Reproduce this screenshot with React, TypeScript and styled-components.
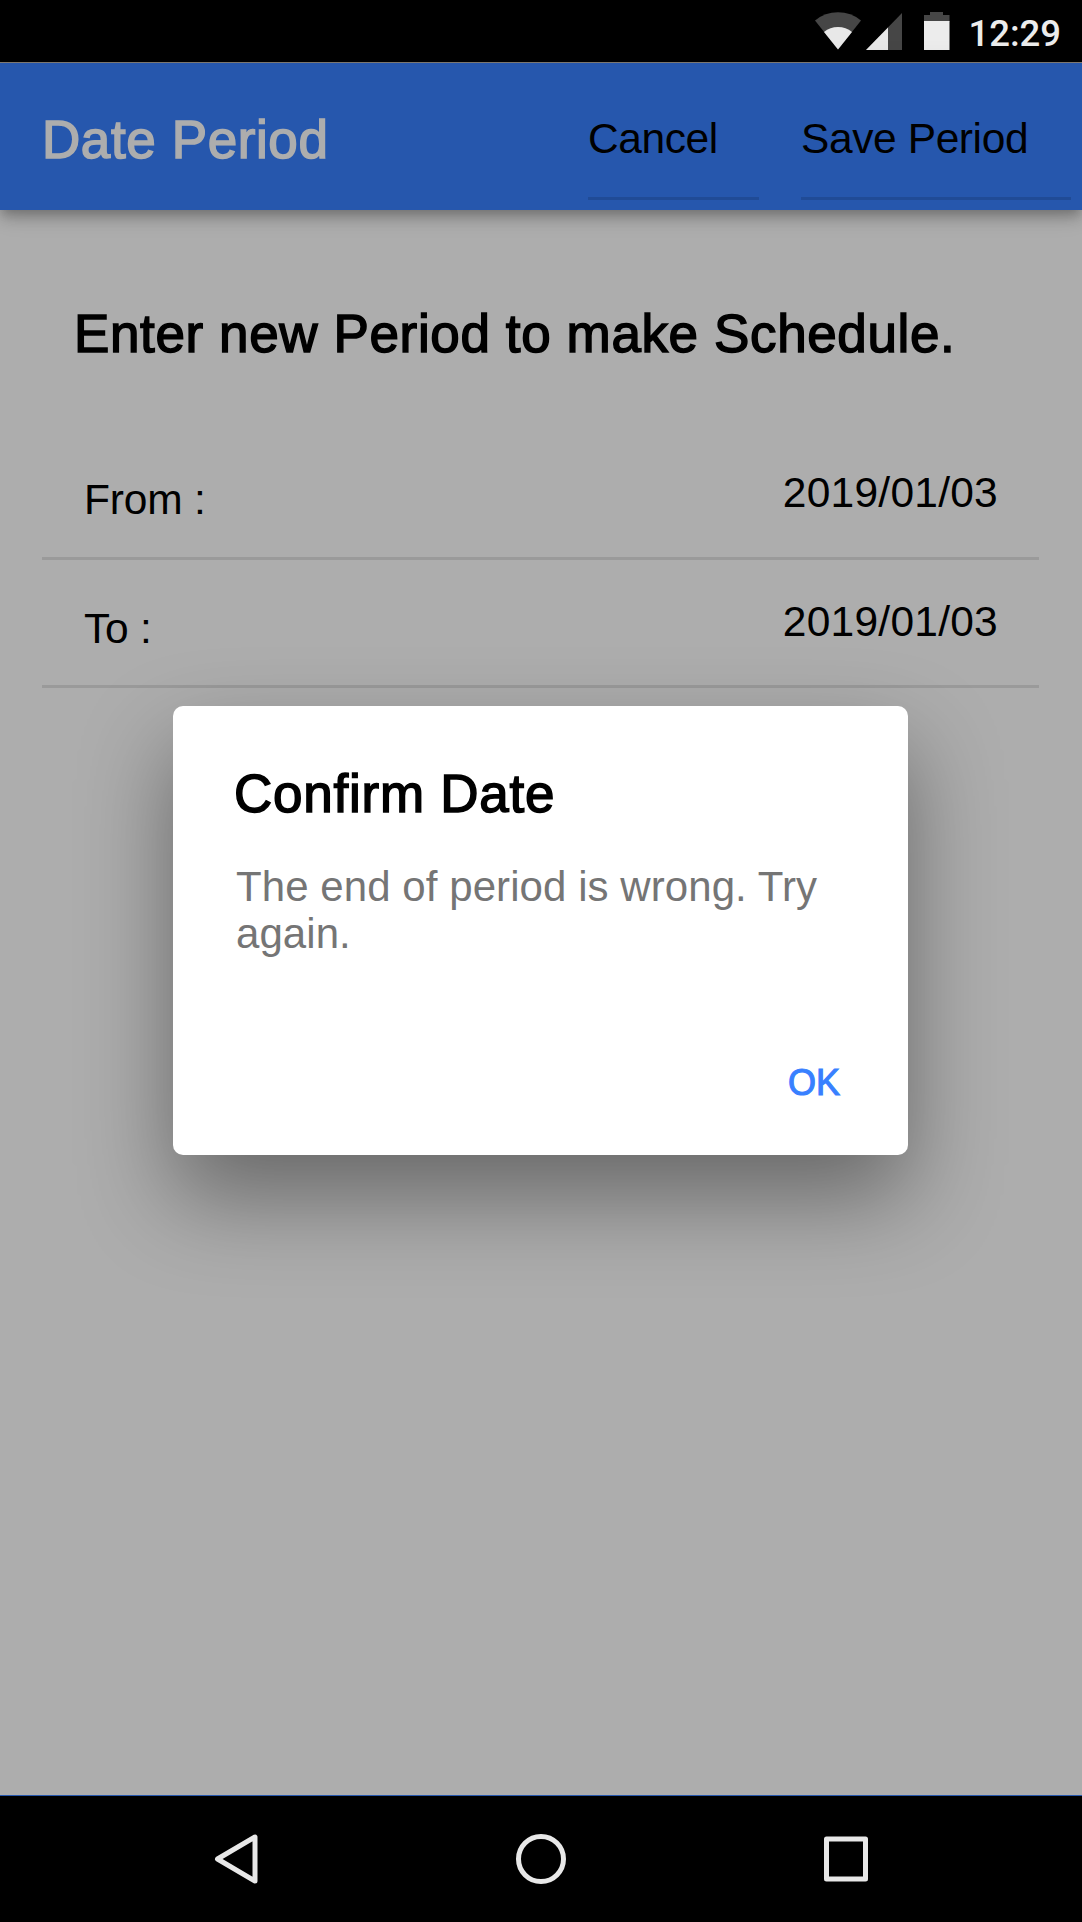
import React from 'react';
import styled, { createGlobalStyle } from 'styled-components';

const GlobalStyle = createGlobalStyle`
  * { box-sizing: border-box; }
  body {
    margin: 0;
    background: #000;
    font-family: "Liberation Sans", Arial, sans-serif;
    color: #000;
  }
`;

const Device = styled.div`
  width: 1082px;
  height: 1922px;
  display: flex;
  flex-direction: column;
  overflow: hidden;
  background: #000;
`;

const StatusBar = styled.div`
  height: 63px;
  flex: none;
  display: flex;
  align-items: flex-start;
  justify-content: flex-end;
  padding: 12px 21px 0 0;
  border-bottom: 1px solid #857f78;
`;

const StatusIcon = styled.svg<{ $gap: number }>`
  display: block;
  height: 38px;
  margin-right: ${(p) => p.$gap}px;
`;

const Clock = styled.time`
  font-family: Roboto, sans-serif;
  font-size: 36.5px;
  font-weight: 500;
  line-height: 43px;
  color: #ececec;
`;

const Screen = styled.main`
  position: relative;
  flex: 1;
  display: flex;
  flex-direction: column;
  background: #fff;
  border-bottom: 1px solid #3880ff;
`;

const Toolbar = styled.header`
  position: relative;
  z-index: 1;
  height: 147px;
  flex: none;
  display: flex;
  align-items: flex-start;
  padding: 0 11px 0 42px;
  background: #3880ff;
  box-shadow: 0 5px 10px -3px rgba(0, 0, 0, 0.2), 0 10px 13px rgba(0, 0, 0, 0.14),
    0 3px 26px rgba(0, 0, 0, 0.12);
`;

const ToolbarTitle = styled.h1`
  flex: 1;
  margin: 0;
  padding-top: 3px;
  font-size: 53px;
  font-weight: 400;
  line-height: 147px;
  letter-spacing: 0.6px;
  color: #fff;
  -webkit-text-stroke: 1.5px #fff;
`;

const ToolbarItem = styled.button<{ $width: number }>`
  width: ${(p) => p.$width}px;
  height: 137px;
  margin: 0 0 0 42px;
  padding: 17px 0 0;
  border: 0;
  border-bottom: 3px solid rgba(0, 0, 0, 0.13);
  background: none;
  font: 42.5px "Liberation Sans", Arial, sans-serif;
  letter-spacing: -0.4px;
  text-align: left;
  color: #000;
`;

const Content = styled.section`
  padding: 97px 43px 0 42px;
`;

const Heading = styled.h2`
  margin: 0 0 70px;
  padding-left: 32px;
  font-size: 53px;
  font-weight: 400;
  line-height: 54px;
  letter-spacing: 0.62px;
  white-space: nowrap;
  -webkit-text-stroke: 1.5px #000;
`;

const DateRow = styled.div`
  height: 128.7px;
  display: flex;
  align-items: center;
  justify-content: space-between;
  padding: 0 41px 2px 42px;
  border-bottom: 3px solid #e4e4e4;
  font-size: 42.5px;
  line-height: 50px;
`;

const DateLabel = styled.span`
  padding-top: 15px;
  letter-spacing: -0.2px;
`;

const DateValue = styled.span`
  letter-spacing: 0.25px;
`;

const Backdrop = styled.div`
  position: absolute;
  inset: 0;
  z-index: 2;
  bottom: -1px;
  display: flex;
  align-items: center;
  justify-content: center;
  padding: 2px 1px 0 0;
  background: rgba(0, 0, 0, 0.32);
`;

const Dialog = styled.div`
  width: 735px;
  height: 449px;
  display: flex;
  flex-direction: column;
  padding: 61px 60px 0 61px;
  border-radius: 10px;
  background: #fff;
  box-shadow: 0 42px 92px rgba(0, 0, 0, 0.4);
`;

const DialogTitle = styled.h2`
  margin: 0;
  font-size: 53px;
  font-weight: 400;
  line-height: 54px;
  letter-spacing: 0.75px;
  -webkit-text-stroke: 1.5px #000;
`;

const DialogMessage = styled.p`
  margin: 43px 0 0;
  padding-left: 2px;
  font-size: 42px;
  line-height: 46.7px;
  letter-spacing: 0.07px;
  color: #757575;
`;

const DialogActions = styled.div`
  display: flex;
  justify-content: flex-end;
  margin-top: 101px;
  padding-right: 8px;
`;

const DialogButton = styled.button`
  padding: 0;
  border: 0;
  background: none;
  font: 36px/50px "Liberation Sans", Arial, sans-serif;
  color: #3880ff;
  -webkit-text-stroke: 1.1px #3880ff;
`;

const NavBar = styled.nav`
  height: 126px;
  flex: none;
  display: flex;
  align-items: center;
  justify-content: center;
  gap: 254px;
`;

const NavIcon = styled.svg`
  display: block;
  width: 52px;
  height: 52px;
  fill: none;
  stroke: #e8e8e8;
  stroke-width: 5;
  stroke-linejoin: round;
`;

const periods = [
  { label: 'From :', value: '2019/01/03' },
  { label: 'To :', value: '2019/01/03' },
];

export default function App() {
  return (
    <>
      <GlobalStyle />
      <Device>
        <StatusBar>
          <StatusIcon $gap={5} width="46" viewBox="0 0 46 38">
            <path d="M0 8.5Q10 0.3 23 0.3T46 8.5L23 37.5Z" fill="#464646" />
            <path d="M9 20Q15 15 23 15T37 20L23 37.5Z" fill="#e8e8e8" />
          </StatusIcon>
          <StatusIcon $gap={22} width="36" viewBox="0 0 36 38">
            <path d="M36 1V38H0Z" fill="#464646" />
            <path d="M22 15.4V38H0Z" fill="#e8e8e8" />
          </StatusIcon>
          <StatusIcon $gap={18} width="26" viewBox="0 0 26 38">
            <path d="M6 0H19V3H25.5V10H0V3H6Z" fill="#464646" />
            <path d="M0 9H25.5V38H0Z" fill="#ececec" />
          </StatusIcon>
          <Clock>12:29</Clock>
        </StatusBar>
        <Screen>
          <Toolbar>
            <ToolbarTitle>Date Period</ToolbarTitle>
            <ToolbarItem $width={171}>Cancel</ToolbarItem>
            <ToolbarItem $width={270}>Save Period</ToolbarItem>
          </Toolbar>
          <Content>
            <Heading>Enter new Period to make Schedule.</Heading>
            {periods.map((p) => (
              <DateRow key={p.label}>
                <DateLabel>{p.label}</DateLabel>
                <DateValue>{p.value}</DateValue>
              </DateRow>
            ))}
          </Content>
          <Backdrop>
            <Dialog role="alertdialog">
              <DialogTitle>Confirm Date</DialogTitle>
              <DialogMessage>The end of period is wrong. Try again.</DialogMessage>
              <DialogActions>
                <DialogButton>OK</DialogButton>
              </DialogActions>
            </Dialog>
          </Backdrop>
        </Screen>
        <NavBar>
          <NavIcon viewBox="0 0 52 52">
            <path d="M8.5 26L46 4V48Z" />
          </NavIcon>
          <NavIcon viewBox="0 0 52 52">
            <circle cx="26" cy="26" r="22.5" />
          </NavIcon>
          <NavIcon viewBox="0 0 52 52">
            <rect x="5.5" y="6" width="39" height="40" />
          </NavIcon>
        </NavBar>
      </Device>
    </>
  );
}
